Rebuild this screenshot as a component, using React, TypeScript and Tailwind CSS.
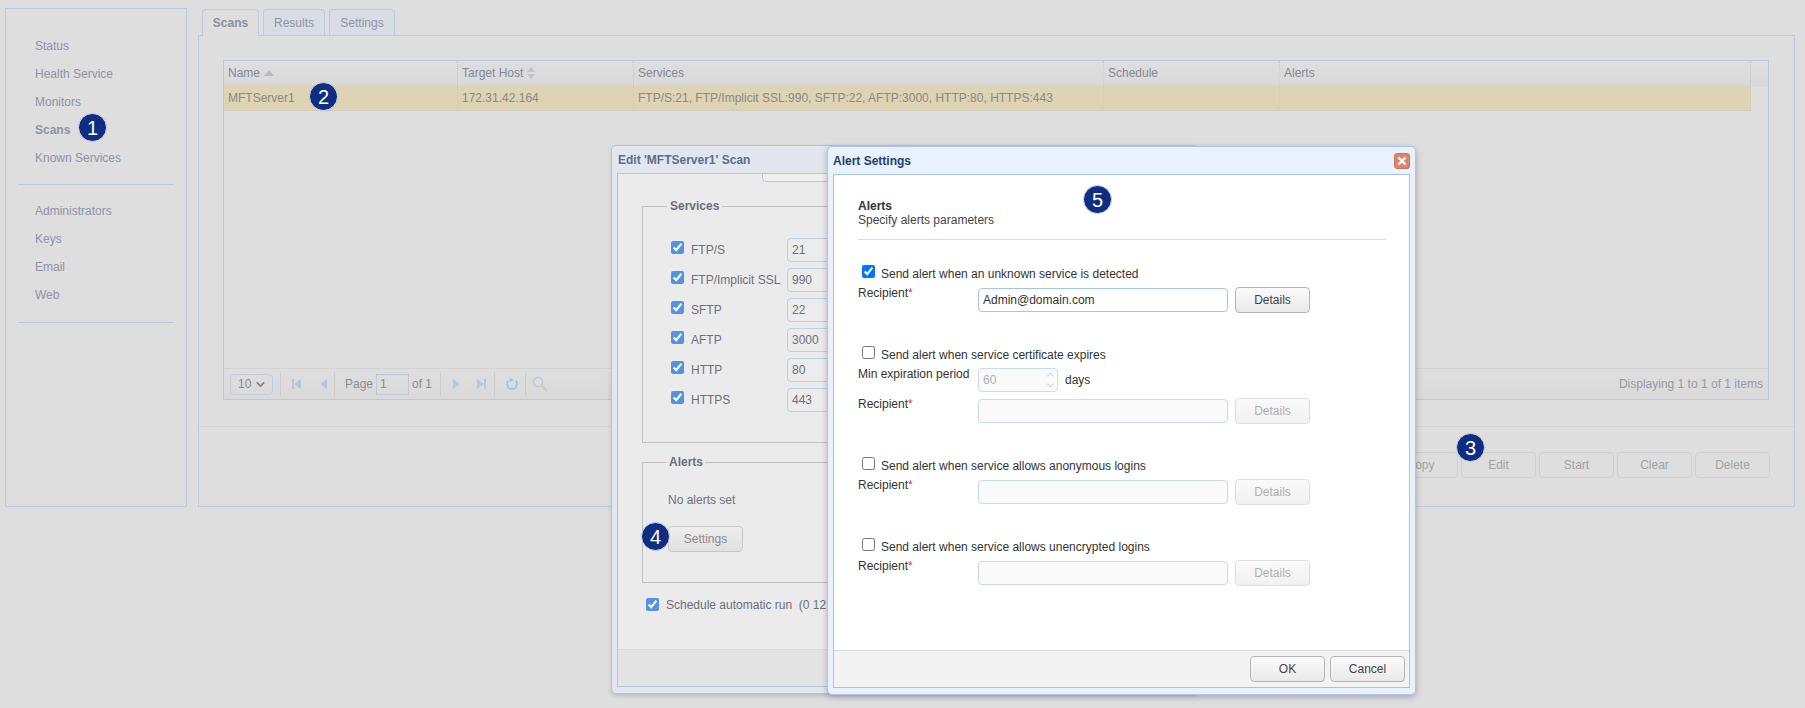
import React from 'react';
import { ChevronDown, ChevronUp } from 'lucide-react';

const navTop = ['Status', 'Health Service', 'Monitors', 'Scans', 'Known Services'];
const navBottom = ['Administrators', 'Keys', 'Email', 'Web'];

const services = [
  { name: 'FTP/S', port: '21' },
  { name: 'FTP/Implicit SSL', port: '990' },
  { name: 'SFTP', port: '22' },
  { name: 'AFTP', port: '3000' },
  { name: 'HTTP', port: '80' },
  { name: 'HTTPS', port: '443' },
];

// Numbered callout placed over the screenshot
function Badge({ n, className }: { n: number; className: string }) {
  return (
    <div
      className={`absolute z-30 flex h-[29px] w-[29px] items-center justify-center rounded-full border border-[#d5dbe8] bg-[#0f2e82] text-[20px] leading-none text-white ${className}`}
    >
      {n}
    </div>
  );
}

function DimButton({ label }: { label: string }) {
  return (
    <div className="flex h-[26px] w-[75px] items-center justify-center rounded-[4px] border border-[#d0d0d0] text-[12px] text-[#a3a3a3]">
      {label}
    </div>
  );
}

function Button({ label, disabled, className = '' }: { label: string; disabled?: boolean; className?: string }) {
  return (
    <button
      type="button"
      className={
        disabled
          ? `flex h-[26px] w-[75px] items-center justify-center rounded-[4px] border border-[#dedede] bg-gradient-to-b from-[#fafafa] to-[#f1f1f1] text-[12px] text-[#b0b0b0] ${className}`
          : `flex h-[26px] w-[75px] items-center justify-center rounded-[4px] border border-[#b4b4b4] bg-gradient-to-b from-[#fbfbfb] to-[#e9e9e9] text-[12px] text-[#444] ${className}`
      }
    >
      {label}
    </button>
  );
}

function Tab({ label, active }: { label: string; active?: boolean }) {
  return (
    <div
      className={
        active
          ? 'relative z-10 -mb-px flex h-[27px] w-[57px] items-center justify-center rounded-t-[4px] border border-b-0 border-[#bccadf] bg-[#dedede] text-[12px] font-bold text-[#8b8f9f]'
          : 'flex h-[26px] items-center justify-center rounded-t-[4px] border border-b-0 border-[#bccadf] bg-[#d8dce4] text-[12px] text-[#8f95a8]'
      }
    >
      {label}
    </div>
  );
}

function HeaderCell({ label, className, children }: { label: string; className: string; children?: React.ReactNode }) {
  return (
    <div className={`flex h-full items-center gap-[4px] border-r border-dotted border-[#c8c8c8] pl-[4px] ${className}`}>
      <span>{label}</span>
      {children}
    </div>
  );
}

function RowCell({ children, className }: { children?: React.ReactNode; className: string }) {
  return <div className={`flex h-full items-center border-r border-dotted border-[#cfc8b0] pl-[4px] ${className}`}>{children}</div>;
}

function PagerSep() {
  return <div className="h-[24px] w-px bg-[#cccccc]" />;
}

function PagerArrow({ dir, bar }: { dir: 'left' | 'right'; bar?: boolean }) {
  return (
    <svg width="12" height="12" viewBox="0 0 12 12" className="fill-[#b2cadd]">
      {dir === 'left' ? <path d="M10 0.5 L3.5 6 L10 11.5 Z" /> : <path d="M2 0.5 L8.5 6 L2 11.5 Z" />}
      {bar && (dir === 'left' ? <rect x="1" y="1" width="2" height="10" /> : <rect x="9" y="1" width="2" height="10" />)}
    </svg>
  );
}

function Pager() {
  return (
    <div className="flex h-[31px] items-center border-t border-[#d2d2d2] bg-gradient-to-b from-[#dedede] to-[#dadada] pl-[6px] pr-[5px] text-[12px] text-[#8c8c8c]">
      <div className="flex h-[21px] w-[43px] items-center rounded-[4px] border border-[#bccde0] pl-[7px] text-[#8a8a8a]">
        10
        <ChevronDown size={13} strokeWidth={3} className="ml-[3px] text-[#808080]" />
      </div>
      <div className="ml-[7px]">
        <PagerSep />
      </div>
      <div className="ml-[10px] w-[26px]">
        <PagerArrow dir="left" bar />
      </div>
      <div className="w-[15px]">
        <PagerArrow dir="left" />
      </div>
      <div className="ml-[2px]">
        <PagerSep />
      </div>
      <span className="ml-[10px]">Page</span>
      <input
        readOnly
        value="1"
        className="ml-[3px] h-[21px] w-[33px] border border-[#b9c9de] bg-transparent pl-[3px] text-[12px] text-[#8c8c8c] outline-none"
      />
      <span className="ml-[3px]">of 1</span>
      <div className="ml-[8px]">
        <PagerSep />
      </div>
      <div className="ml-[10px] w-[24px]">
        <PagerArrow dir="right" />
      </div>
      <div className="w-[19px]">
        <PagerArrow dir="right" bar />
      </div>
      <PagerSep />
      <svg width="14" height="14" viewBox="0 0 14 14" className="ml-[10px]">
        <path d="M3.2 3.8 A5 5 0 1 0 10.8 3.8" fill="none" stroke="#a3c4dc" strokeWidth="2" />
        <path d="M4.5 0.8 L8.6 2.5 L5 5.4 Z" fill="#a3c4dc" />
      </svg>
      <div className="ml-[6px]">
        <PagerSep />
      </div>
      <svg width="16" height="16" viewBox="0 0 16 16" className="ml-[6px]">
        <circle cx="6" cy="6" r="4.6" fill="#d8dfe6" stroke="#bcc6d0" strokeWidth="1.2" />
        <path d="M9.6 9.6 L14 14" stroke="#dcc8a4" strokeWidth="2.2" strokeLinecap="round" />
      </svg>
      <span className="ml-auto text-[#979aa3]">Displaying 1 to 1 of 1 items</span>
    </div>
  );
}

function ServiceRow({ name, port }: { name: string; port: string }) {
  return (
    <div className="flex h-[24px] items-center text-[12px] text-[#6d7078]">
      <input type="checkbox" readOnly checked className="m-0 -mt-[5px] h-[13px] w-[13px] accent-[#5294e2]" />
      <span className="ml-[7px] -mt-[1px] w-[96px]">{name}</span>
      <input
        readOnly
        value={port}
        className="h-[24px] w-[110px] rounded-[4px] border border-[#bcd0e6] bg-[#ececec] pl-[4px] text-[12px] text-[#6d7078] outline-none"
      />
    </div>
  );
}

function EditDialog() {
  return (
    <div className="absolute left-[611px] top-[145px] z-10 flex h-[549px] w-[588px] flex-col rounded-[5px] border border-[#aec6e6] bg-[#e1e6ef] pb-[6px] shadow-[0_2px_4px_rgba(0,0,0,0.15)]">
      <div className="flex h-[27px] items-center pl-[6px] text-[12px] font-bold text-[#5d6f8d]">Edit 'MFTServer1' Scan</div>
      <div className="mx-[5px] flex flex-1 flex-col border border-[#aec6e6] bg-[#ebebeb]">
        <div className="flex-1">
          <div className="ml-[144px] h-[8px] w-[300px] rounded-bl-[5px] border-b border-l border-[#b7c9df] bg-[#f0f0f0]" />
          <fieldset className="ml-[24px] mt-[17px] w-[540px] border border-[#c2c2c2] pb-[30px] pl-[28px] pt-[25px]">
            <legend className="-ml-[4px] px-[3px] text-[12px] font-bold leading-[14px] text-[#6b6f78]">Services</legend>
            <div className="flex flex-col gap-[6px]">
              {services.map((s) => (
                <ServiceRow key={s.name} name={s.name} port={s.port} />
              ))}
            </div>
          </fieldset>
          <fieldset className="ml-[24px] mt-[12px] w-[540px] border border-[#c2c2c2] pb-[30px] pl-[25px] pt-[24px]">
            <legend className="-ml-[1px] px-[2px] text-[12px] font-bold leading-[14px] text-[#6b6f78]">Alerts</legend>
            <div className="text-[12px] leading-[14px] text-[#6d7078]">No alerts set</div>
            <div className="mt-[19px] flex h-[26px] w-[75px] items-center justify-center rounded-[4px] border border-[#c8c8c8] bg-gradient-to-b from-[#eeeeee] to-[#e0e0e0] text-[12px] text-[#8a8a8a]">
              Settings
            </div>
          </fieldset>
          <div className="ml-[28px] mt-[14px] flex h-[16px] items-center text-[12px] text-[#6d7078]">
            <input type="checkbox" readOnly checked className="m-0 -mt-[2px] h-[13px] w-[13px] accent-[#5294e2]" />
            <span className="ml-[7px] whitespace-pre">Schedule automatic run  (0 12</span>
          </div>
        </div>
        <div className="h-[37px] border-t border-[#dadada] bg-[#e4e4e4]" />
      </div>
    </div>
  );
}

function RecipientRow({ value, disabled }: { value?: string; disabled?: boolean }) {
  return (
    <div className="mt-[5px] flex h-[27px] text-[12px] leading-[14px] text-[#333]">
      <span className="w-[120px]">
        Recipient<span className="text-[#e83030]">*</span>
      </span>
      <input
        readOnly
        value={value ?? ''}
        className={
          disabled
            ? 'mt-[2px] h-[24px] w-[250px] rounded-[4px] border border-[#c5daf4] bg-[#fafafa] pl-[4px] outline-none'
            : 'mt-[2px] h-[24px] w-[250px] rounded-[4px] border border-[#a3c4ee] bg-white pl-[4px] text-[12px] text-[#333] outline-none'
        }
      />
      <Button label="Details" disabled={disabled} className="ml-[7px] mt-[1px]" />
    </div>
  );
}

function AlertCheck({ label, checked, className = '' }: { label: string; checked?: boolean; className?: string }) {
  return (
    <div className={`flex h-[16px] items-start pl-[4px] text-[12px] leading-[16px] text-[#333] ${className}`}>
      <input type="checkbox" readOnly checked={!!checked} className="m-0 h-[13px] w-[13px]" />
      <span className="ml-[6px] mt-[1px]">{label}</span>
    </div>
  );
}

function AlertDialog() {
  return (
    <div className="absolute left-[827px] top-[146px] z-20 flex h-[549px] w-[589px] flex-col rounded-[5px] border border-[#a9c6ef] bg-[#e9f1fc] pb-[6px] shadow-[0_2px_6px_rgba(0,0,0,0.25)]">
      <div className="flex h-[27px] items-center justify-between pl-[5px] pr-[5px]">
        <span className="text-[12px] font-bold text-[#1f3f73]">Alert Settings</span>
        <svg width="16" height="16" viewBox="0 0 16 16">
          <rect x="0.5" y="0.5" width="15" height="15" rx="2.5" fill="#e0836a" stroke="#c07a62" />
          <path d="M4.5 4.5 L11.5 11.5 M11.5 4.5 L4.5 11.5" stroke="#fff" strokeWidth="2.4" />
        </svg>
      </div>
      <div className="mx-[5px] flex flex-1 flex-col border border-[#a3c4ee] bg-white">
        <div className="flex-1 pl-[24px] pr-[23px] pt-[24px]">
          <div className="text-[12px] font-bold leading-[14px] text-[#333]">Alerts</div>
          <div className="text-[12px] leading-[14px] text-[#444]">Specify alerts parameters</div>
          <div className="mb-[25px] mt-[12px] h-px bg-[#dcdcdc]" />

          <AlertCheck label="Send alert when an unknown service is detected" checked />
          <RecipientRow value="Admin@domain.com" />

          <AlertCheck label="Send alert when service certificate expires" className="mt-[33px]" />
          <div className="mt-[5px] flex h-[25px] text-[12px] leading-[14px] text-[#333]">
            <span className="w-[120px]">Min expiration period</span>
            <div className="mt-[1px] flex h-[24px] w-[80px] items-center justify-between rounded-[4px] border border-[#c5daf4] bg-[#fafafa] pl-[4px] text-[#b0b0b0]">
              60
              <div className="flex flex-col pr-[1px] text-[#c5daf4]">
                <ChevronUp size={11} strokeWidth={2.5} />
                <ChevronDown size={11} strokeWidth={2.5} />
              </div>
            </div>
            <span className="ml-[7px] mt-[6px]">days</span>
          </div>
          <RecipientRow disabled />

          <AlertCheck label="Send alert when service allows anonymous logins" className="mt-[33px]" />
          <RecipientRow disabled />

          <AlertCheck label="Send alert when service allows unencrypted logins" className="mt-[33px]" />
          <RecipientRow disabled />
        </div>
        <div className="flex h-[37px] justify-end gap-[5px] border-t border-[#dcdcdc] bg-[#f3f3f3] pr-[4px] pt-[5px]">
          <Button label="OK" />
          <Button label="Cancel" />
        </div>
      </div>
    </div>
  );
}

export default function App() {
  return (
    <div className="relative h-[708px] w-full overflow-hidden bg-[#dedede] font-['Liberation_Sans',Arial,sans-serif]">
      <div className="flex gap-[11px] pl-[5px] pr-[10px] pt-[8px]">
        <aside className="h-[499px] w-[182px] shrink-0 border border-[#bccadf] pt-[23px] text-[12px] text-[#8f93a8]">
          {navTop.map((item) => (
            <div key={item} className={`flex h-[28px] items-center pl-[29px] ${item === 'Scans' ? 'font-bold' : ''}`}>
              {item}
            </div>
          ))}
          <div className="mx-[12px] mb-[12px] mt-[12px] h-px bg-[#bccadf]" />
          {navBottom.map((item) => (
            <div key={item} className="flex h-[28px] items-center pl-[29px]">
              {item}
            </div>
          ))}
          <div className="mx-[12px] mt-[13px] h-px bg-[#bccadf]" />
        </aside>

        <main className="flex min-w-0 flex-1 flex-col">
          <div className="flex h-[27px] items-end gap-[4px] pl-[4px]">
            <Tab label="Scans" active />
            <div className="w-[62px]">
              <Tab label="Results" />
            </div>
            <div className="w-[66px]">
              <Tab label="Settings" />
            </div>
          </div>
          <div className="flex h-[472px] flex-col border border-[#bccadf]">
            <div className="flex-1 pl-[24px] pr-[25px] pt-[24px]">
              <div className="flex h-[340px] flex-col border border-[#b8c9e0]">
                <div className="flex h-[25px] shrink-0 border-b border-[#d4d4d4] bg-gradient-to-b from-[#dedede] to-[#d9d9d9] text-[12px] text-[#85889a]">
                  <HeaderCell label="Name" className="w-[234px]">
                    <svg width="10" height="6" viewBox="0 0 10 6" className="fill-[#a9bdd6]">
                      <path d="M5 0 L10 6 L0 6 Z" />
                    </svg>
                  </HeaderCell>
                  <HeaderCell label="Target Host" className="w-[176px]">
                    <svg width="8" height="12" viewBox="0 0 8 12" className="fill-[#c0c4cc]">
                      <path d="M4 0 L8 5 L0 5 Z M4 12 L0 7 L8 7 Z" />
                    </svg>
                  </HeaderCell>
                  <HeaderCell label="Services" className="w-[470px]" />
                  <HeaderCell label="Schedule" className="w-[176px]" />
                  <HeaderCell label="Alerts" className="w-[471px]" />
                </div>
                <div className="flex h-[25px] w-[1527px] shrink-0 border-b border-dotted border-[#cfc8b0] bg-[#ded3b5] text-[12px] text-[#8a8a80]">
                  <RowCell className="w-[234px]">MFTServer1</RowCell>
                  <RowCell className="w-[176px]">172.31.42.164</RowCell>
                  <RowCell className="w-[470px]">FTP/S:21, FTP/Implicit SSL:990, SFTP:22, AFTP:3000, HTTP:80, HTTPS:443</RowCell>
                  <RowCell className="w-[176px]" />
                  <RowCell className="w-[471px]" />
                </div>
                <div className="flex-1" />
                <Pager />
              </div>
            </div>
            <div className="flex h-[80px] shrink-0 justify-end gap-[3px] border-t border-[#d4d4d4] pr-[24px] pt-[25px]">
              <DimButton label="Copy" />
              <DimButton label="Edit" />
              <DimButton label="Start" />
              <DimButton label="Clear" />
              <DimButton label="Delete" />
            </div>
          </div>
        </main>
      </div>

      <EditDialog />
      <AlertDialog />

      <Badge n={1} className="left-[78px] top-[113px]" />
      <Badge n={2} className="left-[309px] top-[82px]" />
      <Badge n={3} className="left-[1456px] top-[433px]" />
      <Badge n={4} className="left-[641px] top-[522px]" />
      <Badge n={5} className="left-[1083px] top-[185px]" />
    </div>
  );
}
